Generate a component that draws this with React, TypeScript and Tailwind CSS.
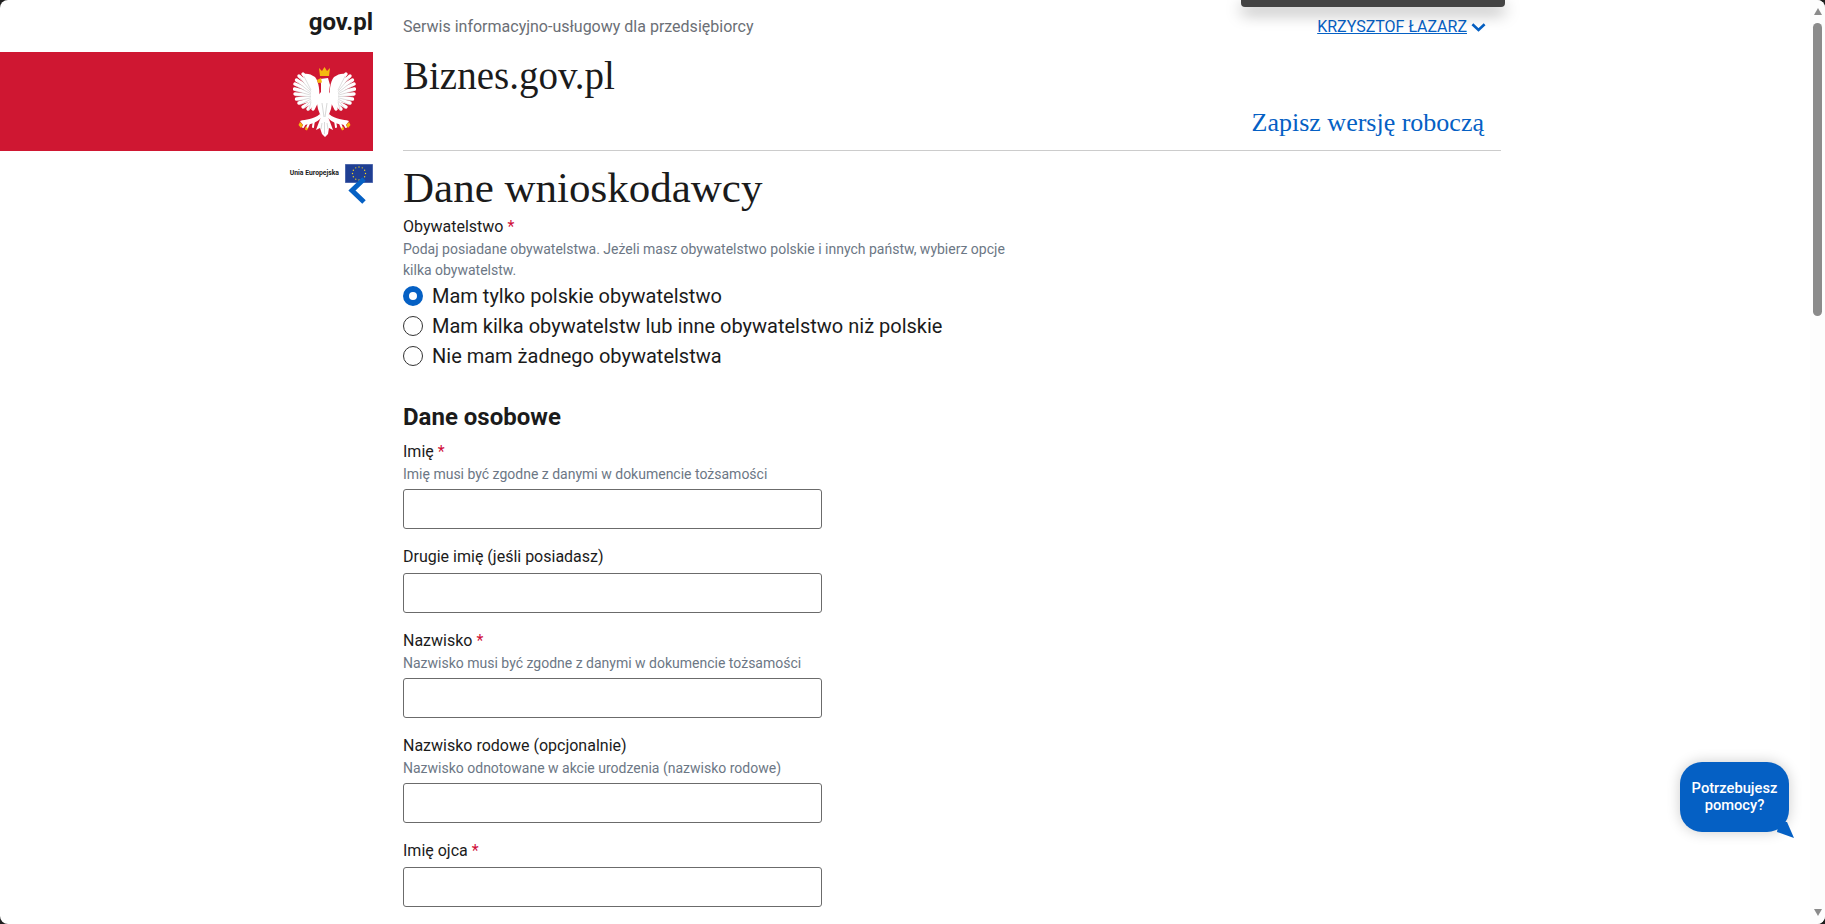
const radios = [
  { label: "Mam tylko polskie obywatelstwo", checked: true },
  { label: "Mam kilka obywatelstw lub inne obywatelstwo niż polskie", checked: false },
  { label: "Nie mam żadnego obywatelstwa", checked: false },
];

const fields = [
  { label: "Imię", required: true, hint: "Imię musi być zgodne z danymi w dokumencie tożsamości" },
  { label: "Drugie imię (jeśli posiadasz)", required: false, hint: "" },
  { label: "Nazwisko", required: true, hint: "Nazwisko musi być zgodne z danymi w dokumencie tożsamości" },
  { label: "Nazwisko rodowe (opcjonalnie)", required: false, hint: "Nazwisko odnotowane w akcie urodzenia (nazwisko rodowe)" },
  { label: "Imię ojca", required: true, hint: "" },
];

const stars = Array.from({ length: 12 }, (_, i) => {
  const a = (i * Math.PI) / 6;
  return { x: 14 + Math.cos(a) * 6.5, y: 9.5 + Math.sin(a) * 6.5 };
});

// feather tips of the left wing, the right one is mirrored
const feathers = [
  [10, 7], [6, 9], [3.500, 13], [2, 17], [1.500, 22], [2, 27], [3.500, 32], [6, 36], [10, 40], [15, 42], [20, 42],
];

const Wing = () => (
  <g>
    <path fill="#fff" d="M26 34 C27 24 26 15 22 10 C18 7 14 6 10 7 L12 24 L20 40 Z" />
    {feathers.map(([x, y], i) => (
      <path key={i} d={`M24 ${24 + i} L${x} ${y}`} stroke="#fff" strokeWidth="3.400" strokeLinecap="round" />
    ))}
    {feathers.slice(0, -1).map(([x, y], i) => (
      <path key={i} d={`M18 ${23 + i * 1.300} L${x + 0.800} ${y + 2}`} stroke="#bdbdbd" strokeWidth="0.500" />
    ))}
    <path d="M7 54 C13 52 20 53 27 47 L29 50 C23 57 17 57 10 58 Z" fill="#fff" />
    <path d="M17 54 L14 61 M13 55 L10 60 M21 53 L20 60" stroke="#fff" strokeWidth="2" strokeLinecap="round" />
    <path d="M7 55 L10 58 L8 61 L5.500 58 Z M12.500 60 L15 61 L14 63.500 L12 62.500 Z" fill="#f5b90f" />
  </g>
);

const Eagle = () => (
  <svg width="63" height="70" viewBox="0 0 63 70" className="shrink-0">
    <Wing />
    <g transform="translate(63 0) scale(-1 1)">
      <Wing />
    </g>
    <path
      fill="#fff"
      d="M27 12 L35 11 L37 18 L36 25 L40 31 L38 42 L35 50 L37 55 L40 63 L36 61 L35 67 L32 70 L29 67 L27 61 L23 63 L26 55 L28 50 L25 42 L23 31 L28 25 L28 17 Z"
    />
    <path d="M29 36 L31 50 M34 36 L32 50 M29 56 L28 62 M34 56 L35 62 M31.500 55 L31.500 67" stroke="#bdbdbd" strokeWidth="0.600" fill="none" />
    <path fill="#f5b90f" d="M26 1 L29 4 L31.500 0 L34 4 L37 1 L36 9 L27 9 Z" />
    <path fill="#f5b90f" d="M28 11 L24 13 L25 16 L29 15.500 Z" />
  </svg>
);

const Field = ({ label, required, hint }: { label: string; required: boolean; hint: string }) => (
  <div>
    <div className="h-6 text-[16px] leading-6 text-[#1b1b1b]">
      {label}
      {required && <span className="ml-1 text-[#d0103a]">*</span>}
    </div>
    {hint && <div className="h-[21px] text-[14px] leading-[21px] text-[#6c7785]">{hint}</div>}
    <input type="text" className="mt-[4px] block h-10 w-[419px] rounded-[3px] border border-[#6b6b6b] bg-white" />
  </div>
);

const Sidebar = () => (
  <aside className="flex w-[373px] shrink-0 flex-col items-end">
    <div className="flex h-[52px] items-center pb-[8px] text-[24px] font-bold text-[#1b1b1b]">gov.pl</div>
    <div className="flex h-[99px] w-full items-center justify-end bg-[#cf1732] pr-[17px]">
      <Eagle />
    </div>
    <div className="relative mt-[13px] flex h-[19px] items-center gap-[6px]">
      <span className="text-[6.800px] font-bold leading-none text-[#1b1b1b]">Unia Europejska</span>
      <svg width="28" height="19" viewBox="0 0 28 19">
        <rect width="28" height="19" fill="#1f3f93" stroke="#7c8fc4" strokeWidth="1" />
        {stars.map((s, i) => (
          <circle key={i} cx={s.x} cy={s.y} r="0.7" fill="#f2d21f" />
        ))}
      </svg>
      <svg width="22" height="30" viewBox="0 0 22 30" className="absolute right-[4px] top-[13px]">
        <path d="M17 2 L5 13.500 L17 25" fill="none" stroke="#0560c4" strokeWidth="5" />
      </svg>
    </div>
  </aside>
);

const Scrollbar = () => (
  <div className="flex w-[15px] shrink-0 flex-col items-center bg-[#fdfdfd]">
    <div className="mt-[8px] h-0 w-0 border-x-[4.500px] border-b-[7px] border-x-transparent border-b-[#8b8b8b]" />
    <div className="mt-[8px] h-[293px] w-[9px] rounded-full bg-[#8b8b8b]" />
    <div className="mt-auto mb-[8px] h-0 w-0 border-x-[4.500px] border-t-[7px] border-x-transparent border-t-[#8b8b8b]" />
  </div>
);

export default function App() {
  return (
    <div className="h-[924px] w-[1825px] overflow-hidden bg-[#1f1f1f] font-['Roboto',sans-serif]">
      <div className="relative flex h-full overflow-hidden rounded-[8px] bg-white">
        <Sidebar />
        <main className="ml-[30px] flex w-[1098px] shrink-0 flex-col">
          <div className="flex h-[52px] items-center justify-between pt-[2px] pr-[15px]">
            <span className="text-[16px] text-[#6b6f76]">Serwis informacyjno-usługowy dla przedsiębiorcy</span>
            <span className="flex items-center gap-[4px] text-[16px] text-[#0560c4]">
              <span className="underline">KRZYSZTOF ŁAZARZ</span>
              <svg width="15" height="11" viewBox="0 0 16 11">
                <path d="M1.500 2 L8 8 L14.500 2" fill="none" stroke="#0560c4" strokeWidth="2.800" />
              </svg>
            </span>
          </div>
          <div className="h-[48px] font-['Liberation_Serif',serif] text-[39px] leading-[48px] text-[#1b1b1b]">Biznes.gov.pl</div>
          <div className="flex h-[51px] items-center justify-end border-b border-[#cccccc] pr-[17px] pb-[6px] font-['Liberation_Serif',serif] text-[26px] text-[#0560c4]">
            Zapisz wersję roboczą
          </div>
          <h1 className="mt-[12px] h-[50px] font-['Liberation_Serif',serif] text-[43px] leading-[50px] text-[#1b1b1b]">Dane wnioskodawcy</h1>
          <div className="mt-[2px] h-6 text-[16px] leading-6 text-[#1b1b1b]">
            Obywatelstwo<span className="ml-1 text-[#d0103a]">*</span>
          </div>
          <div className="w-[612px] text-[14px] leading-[21px] text-[#6c7785]">
            Podaj posiadane obywatelstwa. Jeżeli masz obywatelstwo polskie i innych państw, wybierz opcje kilka obywatelstw.
          </div>
          <div className="flex flex-col">
            {radios.map((r) => (
              <label key={r.label} className="flex h-[30px] items-center gap-[9px] text-[20px] text-[#1b1b1b]">
                {r.checked ? (
                  <span className="h-5 w-5 rounded-full border-[6px] border-[#0560c4] bg-white" />
                ) : (
                  <span className="h-5 w-5 rounded-full border border-[#333333] bg-white" />
                )}
                {r.label}
              </label>
            ))}
          </div>
          <h2 className="mt-[30px] h-[32px] text-[24px] font-bold leading-[32px] text-[#1b1b1b]">Dane osobowe</h2>
          <div className="mt-[7px] flex flex-col gap-[16px]">
            {fields.map((f) => (
              <Field key={f.label} {...f} />
            ))}
          </div>
        </main>
        <div className="flex-1" />
        <Scrollbar />
        <div className="absolute right-[320px] top-0 h-[7px] w-[264px] rounded-b-[4px] bg-[#444444] shadow-[0_6px_16px_rgba(0,0,0,0.4)]" />
        <div className="absolute left-[1680px] top-[762px] flex h-[70px] w-[109px] items-center justify-center rounded-[22px] bg-[#0560c4] text-center text-[14.700px] font-medium leading-[17px] text-white shadow-[0_0_14px_rgba(0,0,0,0.2)]">
          Potrzebujesz
          <br />
          pomocy?
          <svg width="18" height="22" viewBox="0 0 18 22" className="absolute left-[97px] top-[55px]">
            <path d="M0 15 L17 21 L10 5 L2 5 Z" fill="#0560c4" />
          </svg>
        </div>
      </div>
    </div>
  );
}
